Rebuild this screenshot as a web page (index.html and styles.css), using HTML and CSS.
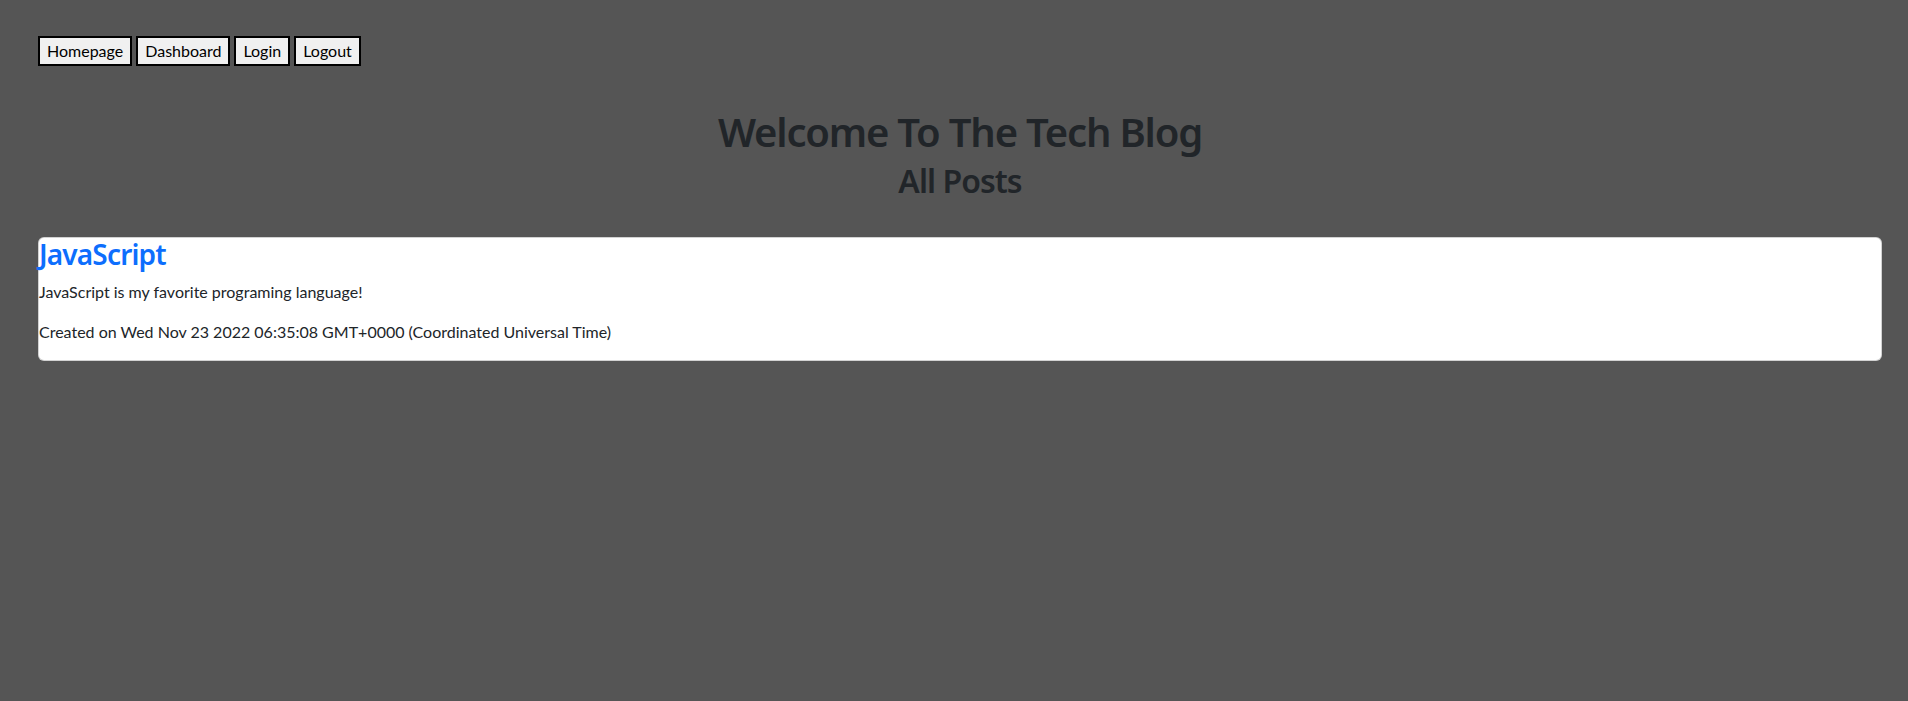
FILE: index.html
```html
<!DOCTYPE html>
<html lang="en">
<head>
<meta charset="utf-8">
<title>The Tech Blog</title>
<link rel="stylesheet" href="styles.css">
</head>
<body>
<div class="page">
  <nav class="nav">
    <button class="nav-btn">Homepage</button>
    <button class="nav-btn">Dashboard</button>
    <button class="nav-btn">Login</button>
    <button class="nav-btn">Logout</button>
  </nav>
  <header class="hero">
    <h1 class="hero-title">Welcome To The Tech Blog</h1>
    <h2 class="hero-sub">All Posts</h2>
  </header>
  <article class="card">
    <h3 class="card-title"><a href="#" class="card-link">JavaScript</a></h3>
    <p class="card-text">JavaScript is my favorite programing language!</p>
    <p class="card-text">Created on Wed Nov 23 2022 06:35:08 GMT+0000 (Coordinated Universal Time)</p>
  </article>
</div>
</body>
</html>
```

FILE: styles.css
```css
html, body {
  margin: 0;
  padding: 0;
  background: #555555;
}
body {
  font-family: Lato, "Open Sans", "Noto Sans", sans-serif;
  font-size: 16px;
  line-height: 1.5;
  color: #212529;
}
.page {
  padding: 36px 26px 0 38px;
}
.nav {
  display: flex;
  gap: 4px;
}
.nav-btn {
  font-family: inherit;
  font-size: 16px;
  line-height: 24px;
  height: 30px;
  padding: 1px 7px;
  border: 2px solid #000;
  background: #f0f0f0;
  color: #000;
  border-radius: 0;
  margin: 0;
}
.hero {
  text-align: center;
  margin-top: 42px;
}
.hero-title,
.hero-sub,
.card-title {
  font-family: "Noto Sans", "Open Sans", sans-serif;
  font-weight: 600;
  line-height: 1.2;
  letter-spacing: -0.03em;
}
.hero-title {
  font-size: 40px;
  margin: 0 0 6px;
}
.hero-sub {
  font-size: 32px;
  margin: 0;
}
.card {
  display: flex;
  flex-direction: column;
  margin-top: 37px;
  background: #fff;
  border: 1px solid rgba(0, 0, 0, 0.175);
  border-radius: 6px;
}
.card-title {
  font-size: 28px;
  margin: 0 0 8px;
}
.card-link {
  color: #0d6efd;
  text-decoration: none;
}
.card-text {
  margin: 0 0 16px;
  font-size: 16px;
}
```
